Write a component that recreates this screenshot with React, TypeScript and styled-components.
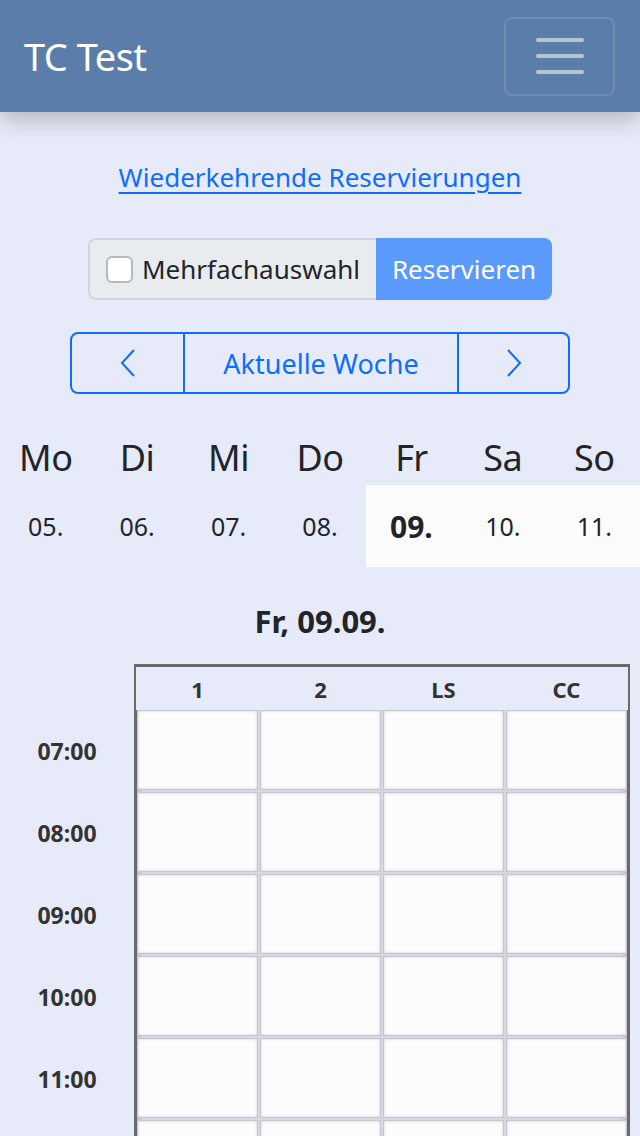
import React from 'react';
import styled, { createGlobalStyle } from 'styled-components';

const GlobalStyle = createGlobalStyle`
  html, body {
    margin: 0;
    padding: 0;
    background: #e7eaf8;
    font-family: "Noto Sans", "Open Sans", sans-serif;
    color: #212529;
  }
  * { box-sizing: border-box; }
`;

const Navbar = styled.header`
  height: 112px;
  background: #5a7daa;
  display: flex;
  align-items: center;
  justify-content: space-between;
  padding: 0 25px 0 24px;
  box-shadow: 0 8px 22px rgba(0, 0, 0, 0.22);
  position: relative;
  z-index: 1;
`;

const Brand = styled.span`
  color: #fff;
  font-size: 38px;
  line-height: 1;
  letter-spacing: -0.5px;
`;

const Toggler = styled.button`
  width: 111px;
  height: 79px;
  border: 2px solid rgba(255, 255, 255, 0.12);
  border-radius: 8px;
  background: transparent;
  display: flex;
  align-items: center;
  justify-content: center;
  padding: 0;
`;

const Main = styled.main`
  display: flex;
  flex-direction: column;
  align-items: center;
`;

const Link = styled.a`
  margin-top: 41px;
  font-size: 26px;
  line-height: 48px;
  color: #0d6efd;
  text-decoration: underline;
  text-underline-offset: 5px;
`;

const InputGroup = styled.div`
  margin-top: 37px;
  display: flex;
  height: 62px;
  border-radius: 8px;
  overflow: hidden;
`;

const CheckLabel = styled.label`
  display: flex;
  align-items: center;
  gap: 9px;
  padding: 0 16px;
  background: #e9ecef;
  border: 2px solid #ced4da;
  border-right: none;
  border-radius: 8px 0 0 8px;
  font-size: 26px;
`;

const Box = styled.span`
  width: 27px;
  height: 27px;
  border: 2px solid #b8b8b8;
  border-radius: 6px;
  background: #fff;
`;

const ReserveButton = styled.button`
  border: none;
  background: #5a9afb;
  color: #fff;
  font-family: inherit;
  font-size: 26px;
  padding: 0;
  width: 176px;
`;

const WeekNav = styled.div`
  margin-top: 32px;
  display: grid;
  grid-template-columns: 111px 274px 111px;
  height: 62px;
  border: 2px solid #0d6efd;
  border-radius: 8px;
  overflow: hidden;
`;

const NavButton = styled.button<{ $divider?: boolean }>`
  background: transparent;
  border: none;
  border-left: ${({ $divider }) => ($divider ? '2px solid #0d6efd' : 'none')};
  color: #0d6efd;
  font-family: inherit;
  font-size: 27px;
  display: flex;
  align-items: center;
  justify-content: center;
  padding: 0;
`;

const Week = styled.div`
  margin-top: 36px;
  width: 100%;
  display: grid;
  grid-template-columns: repeat(7, 1fr);
  grid-template-rows: 55px 82px;
`;

const DayName = styled.div`
  font-size: 36px;
  display: flex;
  align-items: center;
  justify-content: center;
  letter-spacing: -0.5px;
`;

const DayDate = styled.div<{ $active?: boolean; $light?: boolean }>`
  display: flex;
  align-items: center;
  justify-content: center;
  font-size: ${({ $active }) => ($active ? '30px' : '25px')};
  font-weight: ${({ $active }) => ($active ? 700 : 400)};
  background: ${({ $light }) => ($light ? '#fcfcfc' : 'transparent')};
`;

const DayTitle = styled.h2`
  margin: 34px 0 0;
  font-size: 31px;
  line-height: 40px;
  font-weight: 700;
`;

const Schedule = styled.div`
  margin-top: 23px;
  width: 100%;
  display: grid;
  grid-template-columns: 134px 496px;
`;

const Times = styled.div`
  display: flex;
  flex-direction: column;
  padding-top: 46px;
`;

const TimeLabel = styled.div`
  height: 82px;
  display: flex;
  align-items: center;
  justify-content: center;
  font-size: 23px;
  font-weight: 700;
  color: #333;
`;

const Board = styled.div`
  border: 3px solid #6a6a6a;
  border-bottom: none;
  box-shadow: inset 0 0 6px rgba(0, 0, 0, 0.35);
  display: grid;
  grid-template-columns: repeat(4, 1fr);
  grid-template-rows: 41px;
  grid-auto-rows: 80px;
  background: #d6d8e5;
  gap: 2px;
`;

const CourtHead = styled.div`
  background: #e7eaf8;
  display: flex;
  align-items: center;
  justify-content: center;
  font-size: 22px;
  font-weight: 700;
  color: #333;
  margin: 0 -1px -2px;
`;

const Cell = styled.div`
  background: #fcfcfc;
  border: 1px solid #c6c6cc;
  box-shadow: inset 0 0 3px rgba(0, 0, 0, 0.18);
`;

const Chevron = ({ dir }: { dir: 'left' | 'right' }) => (
  <svg width="16" height="28" viewBox="0 0 16 28" fill="none">
    <polyline
      points={dir === 'left' ? '14,1 2,14 14,27' : '2,1 14,14 2,27'}
      stroke="#0d6efd"
      strokeWidth="2"
    />
  </svg>
);

const Hamburger = () => (
  <svg width="48" height="36" viewBox="0 0 48 36">
    {[2, 18, 34].map((y) => (
      <line key={y} x1="2" x2="46" y1={y} y2={y} stroke="rgba(255,255,255,0.55)" strokeWidth="4" strokeLinecap="round" />
    ))}
  </svg>
);

const days = [
  ['Mo', '05.'],
  ['Di', '06.'],
  ['Mi', '07.'],
  ['Do', '08.'],
  ['Fr', '09.'],
  ['Sa', '10.'],
  ['So', '11.'],
];
const courts = ['1', '2', 'LS', 'CC'];
const hours = ['07:00', '08:00', '09:00', '10:00', '11:00'];
const rowCount = 6;

export default function App() {
  return (
    <>
      <GlobalStyle />
      <Navbar>
        <Brand>TC Test</Brand>
        <Toggler aria-label="Menü">
          <Hamburger />
        </Toggler>
      </Navbar>
      <Main>
        <Link href="#">Wiederkehrende Reservierungen</Link>
        <InputGroup>
          <CheckLabel>
            <Box />
            Mehrfachauswahl
          </CheckLabel>
          <ReserveButton>Reservieren</ReserveButton>
        </InputGroup>
        <WeekNav>
          <NavButton><Chevron dir="left" /></NavButton>
          <NavButton $divider>Aktuelle Woche</NavButton>
          <NavButton $divider><Chevron dir="right" /></NavButton>
        </WeekNav>
        <Week>
          {days.map(([d]) => (
            <DayName key={d}>{d}</DayName>
          ))}
          {days.map(([d, n], i) => (
            <DayDate key={n} $active={d === 'Fr'} $light={i >= 4}>
              {n}
            </DayDate>
          ))}
        </Week>
        <DayTitle>Fr, 09.09.</DayTitle>
        <Schedule>
          <Times>
            {hours.map((h) => (
              <TimeLabel key={h}>{h}</TimeLabel>
            ))}
          </Times>
          <Board>
            {courts.map((c) => (
              <CourtHead key={c}>{c}</CourtHead>
            ))}
            {Array.from({ length: rowCount * courts.length }, (_, i) => (
              <Cell key={i} />
            ))}
          </Board>
        </Schedule>
      </Main>
    </>
  );
}
